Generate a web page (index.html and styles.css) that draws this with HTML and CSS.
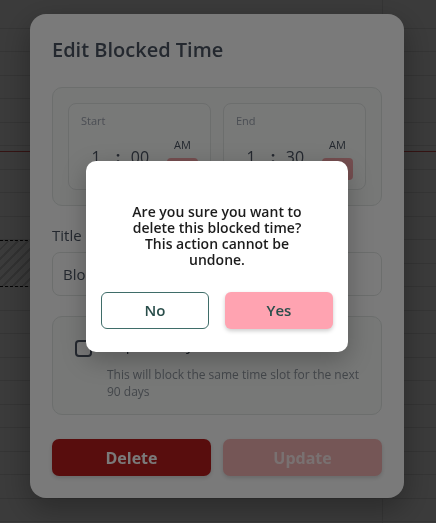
FILE: index.html
```html
<!DOCTYPE html>
<html lang="en">
<head>
    <meta charset="UTF-8">
    <meta name="viewport" content="width=device-width, initial-scale=1.0">
    <title>Edit Blocked Time</title>
    <link rel="stylesheet" href="styles.css">
</head>
<body>
    <!-- calendar underneath the modals -->
    <div class="calendar">
        <div class="day-col">
            <div class="now-line"></div>
            <div class="blocked-slot"></div>
        </div>
        <div class="day-col"></div>
    </div>

    <div class="backdrop">
        <div class="modal">
            <h2>Edit Blocked Time</h2>

            <div class="time-section">
                <div class="time-box">
                    <div class="time-label">Start</div>
                    <div class="time-row">
                        <span class="digit">1</span>
                        <span class="colon">:</span>
                        <span class="digit">00</span>
                        <div class="ampm">
                            <span>AM</span>
                            <button class="ampm-btn">PM</button>
                        </div>
                    </div>
                </div>
                <div class="time-box">
                    <div class="time-label">End</div>
                    <div class="time-row">
                        <span class="digit">1</span>
                        <span class="colon">:</span>
                        <span class="digit">30</span>
                        <div class="ampm">
                            <span>AM</span>
                            <button class="ampm-btn">PM</button>
                        </div>
                    </div>
                </div>
            </div>

            <label class="field-label" for="blockTitle">Title</label>
            <input type="text" id="blockTitle" class="field-input" value="Blocked Time">

            <div class="repeat-box">
                <label class="repeat-row">
                    <span class="checkbox"></span>
                    <span>Repeat daily</span>
                </label>
                <p class="repeat-note">This will block the same time slot for the next 90 days</p>
            </div>

            <div class="actions">
                <button class="btn btn-delete">Delete</button>
                <button class="btn btn-update" disabled>Update</button>
            </div>
        </div>
    </div>

    <div class="backdrop confirm-backdrop">
        <div class="confirm">
            <p>Are you sure you want to delete this blocked time? This action cannot be undone.</p>
            <div class="confirm-actions">
                <button class="btn-no">No</button>
                <button class="btn-yes">Yes</button>
            </div>
        </div>
    </div>
</body>
</html>
```

FILE: styles.css
```css
* {
    box-sizing: border-box;
    margin: 0;
    padding: 0;
    font-family: 'Open Sans', 'Liberation Sans', sans-serif;
}
body {
    background: #fff;
    width: 436px;
    height: 523px;
    overflow: hidden;
}
.calendar {
    display: grid;
    grid-template-columns: 382px 1fr;
    height: 523px;
    background-image: repeating-linear-gradient(to bottom, transparent 0 22.5px, #e3e3e3 22.5px 23.5px);
    background-position: 0 5px;
}
.day-col {
    position: relative;
}
.day-col + .day-col {
    border-left: 1px solid #e3e3e3;
}
.now-line {
    position: absolute;
    left: 0;
    right: -60px;
    top: 151px;
    height: 1px;
    background: #e25555;
}
.blocked-slot {
    position: absolute;
    left: 0;
    right: 40px;
    top: 240px;
    height: 47px;
    border-top: 1px dashed #111;
    border-bottom: 1px dashed #111;
    background: repeating-linear-gradient(135deg, #fff 0 5px, #d6d6d6 5px 7px);
}

.backdrop {
    position: fixed;
    inset: 0;
    background: rgba(0, 0, 0, 0.52);
    display: flex;
    justify-content: center;
    align-items: flex-start;
    padding: 14px 2px 0 0;
}
.modal {
    width: 374px;
    background: #fff;
    border-radius: 16px;
    padding: 22px;
    box-shadow: 0 10px 30px rgba(0, 0, 0, 0.3);
}
.modal h2 {
    font-size: 20px;
    font-weight: 600;
    line-height: 28px;
    color: #4b5563;
    margin-bottom: 23px;
}
.time-section {
    display: grid;
    grid-template-columns: 1fr 1fr;
    gap: 12px;
    border: 1px solid #e2e6e4;
    border-radius: 10px;
    padding: 15px;
    background: #f8faf9;
}
.time-box {
    height: 87px;
    border: 1px solid #e2e6e4;
    border-radius: 8px;
    padding: 10px 12px;
    background: #fbfcfb;
}
.time-label {
    font-size: 11px;
    line-height: 14px;
    color: #9ca3af;
}
.time-row {
    display: flex;
    align-items: flex-start;
    margin-top: 10px;
}
.digit, .colon {
    padding-top: 8px;
    font-size: 16px;
    line-height: 22px;
    color: #4b5563;
    text-align: center;
}
.digit {
    width: 30px;
}
.colon {
    width: 14px;
    font-weight: 700;
}
.ampm {
    margin-left: 12px;
    width: 31px;
    display: flex;
    flex-direction: column;
    align-items: center;
    gap: 6px;
    font-size: 11px;
    font-weight: 500;
    line-height: 14px;
    color: #4b5563;
}
.ampm-btn {
    width: 31px;
    height: 22px;
    border: none;
    border-radius: 4px;
    background: #f4a3a8;
    color: #fff;
    font-size: 11px;
}
.field-label {
    display: block;
    margin-top: 18px;
    font-size: 15px;
    font-weight: 500;
    line-height: 22px;
    color: #4b5563;
}
.field-input {
    display: block;
    width: 100%;
    height: 44px;
    margin-top: 6px;
    padding: 0 10px;
    border: 1px solid #e2e6e4;
    border-radius: 8px;
    font-size: 15px;
    color: #4b5563;
    background: #fff;
}
.repeat-box {
    margin-top: 20px;
    border: 1px solid #e2e6e4;
    border-radius: 10px;
    padding: 16px 16px 14px 22px;
    background: #f8faf9;
}
.repeat-row {
    display: flex;
    align-items: flex-start;
    gap: 16px;
    font-size: 15px;
    font-weight: 500;
    line-height: 22px;
    color: #374151;
}
.checkbox {
    width: 17px;
    height: 17px;
    margin-top: 7px;
    border: 2px solid #4b5563;
    border-radius: 4px;
    background: #fff;
}
.repeat-note {
    margin: 9px 0 0 32px;
    font-size: 12px;
    line-height: 17px;
    color: #8d949c;
}
.actions {
    display: grid;
    grid-template-columns: 1fr 1fr;
    gap: 12px;
    margin-top: 24px;
}
.btn {
    height: 37px;
    border: none;
    border-radius: 7px;
    font-size: 16px;
    font-weight: 700;
    color: #fff;
    box-shadow: 0 2px 4px rgba(0, 0, 0, 0.15);
}
.btn-delete {
    background: #b81d1d;
}
.btn-update {
    background: #f5b4b4;
    color: rgba(255, 255, 255, 0.75);
}

.confirm-backdrop {
    align-items: center;
    padding: 14px 2px 25px 0;
}
.confirm {
    width: 262px;
    background: #fff;
    border-radius: 10px;
    padding: 43px 15px 23px;
    box-shadow: 0 8px 24px rgba(0, 0, 0, 0.25);
    text-align: center;
}
.confirm p {
    max-width: 180px;
    margin: 0 auto;
    font-size: 14px;
    font-weight: 600;
    line-height: 16px;
    color: #1c1c1c;
}
.confirm-actions {
    display: grid;
    grid-template-columns: 1fr 1fr;
    gap: 16px;
    margin-top: 24px;
}
.confirm-actions button {
    height: 37px;
    border-radius: 6px;
    font-size: 15px;
    font-weight: 600;
    color: #2a4e4b;
    cursor: pointer;
}
.btn-no {
    background: #fff;
    border: 1px solid #3f6d69;
}
.btn-yes {
    background: #ffa3b1;
    border: none;
    box-shadow: 0 2px 4px rgba(0, 0, 0, 0.2);
}
```
